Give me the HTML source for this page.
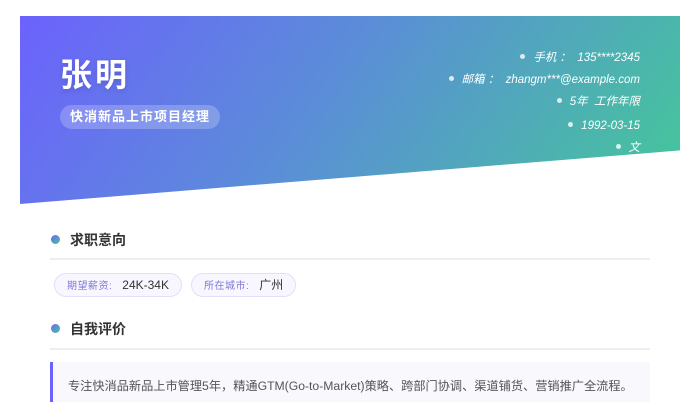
<!DOCTYPE html>
<html><head><meta charset="utf-8"><style>
body{margin:0;width:700px;height:400px;overflow:hidden;background:#fff;font-family:"Liberation Sans","Noto Sans CJK SC",sans-serif;position:relative}
.hd{position:absolute;left:20px;top:16px;width:660px;height:188px;background:linear-gradient(125deg,#6c62fd 0%,#5b8dd8 45%,#44c898 100%);clip-path:polygon(0 0,100% 0,100% 71.5%,0 100%)}
.name{position:absolute;left:60px;top:50px;font-size:32px;font-weight:bold;color:#fff;letter-spacing:3px;text-shadow:0 2px 6px rgba(0,0,0,.15)}
.role{position:absolute;left:60px;top:105px;height:24px;line-height:24px;padding:0 10px;border-radius:12px;background:rgba(255,255,255,.22);color:#fff;font-size:13px;font-weight:bold;letter-spacing:1px}
.ct{position:absolute;right:60px;color:#fff;font-size:11.5px;line-height:16px;height:16px;font-style:italic;white-space:nowrap}
.ct:before{content:"";display:inline-block;width:5px;height:5px;border-radius:50%;background:rgba(255,255,255,.8);margin-right:8px;vertical-align:2px}
.sec{position:absolute;left:50px;width:600px;height:2px;background:#eeeef0}
.dot{position:absolute;left:51px;width:9px;height:9px;border-radius:50%;background:linear-gradient(135deg,#6c62fd,#44c898)}
.tt{position:absolute;left:70px;font-size:14px;font-weight:bold;color:#333}
.tag{position:absolute;top:273px;height:22px;line-height:22px;border:1px solid #e2defb;background:#f8f7ff;border-radius:12px;padding:0 12px;font-size:12px;color:#333}
.tag span{font-size:10px;color:#8078d6;margin-right:10px;letter-spacing:.5px}
.q{position:absolute;left:50px;top:362px;height:40px;border-left:3px solid #6c63ff;background:#f8f8fd;font-size:12.2px;color:#555;line-height:48px;padding-left:15px;box-sizing:border-box;width:600px;white-space:nowrap;overflow:hidden}
</style></head><body>
<div class="hd"></div>
<div class="name">张明</div>
<div class="role">快消新品上市项目经理</div>
<div class="ct" style="top:50px">手机 ：&nbsp; 135****2345</div>
<div class="ct" style="top:72px">邮箱 ：&nbsp; zhangm***@example.com</div>
<div class="ct" style="top:94px">5年&nbsp; 工作年限</div>
<div class="ct" style="top:118px">1992-03-15</div>
<div class="ct" style="top:140px">文</div>
<div class="dot" style="top:235px"></div><div class="tt" style="top:230px">求职意向</div>
<div class="sec" style="top:258px"></div>
<div class="tag" style="left:54px"><span>期望薪资:</span>24K-34K</div>
<div class="tag" style="left:191px"><span>所在城市:</span>广州</div>
<div class="dot" style="top:324px"></div><div class="tt" style="top:319px">自我评价</div>
<div class="sec" style="top:348px"></div>
<div class="q">专注快消品新品上市管理5年，精通GTM(Go-to-Market)策略、跨部门协调、渠道铺货、营销推广全流程。</div>
</body></html>
